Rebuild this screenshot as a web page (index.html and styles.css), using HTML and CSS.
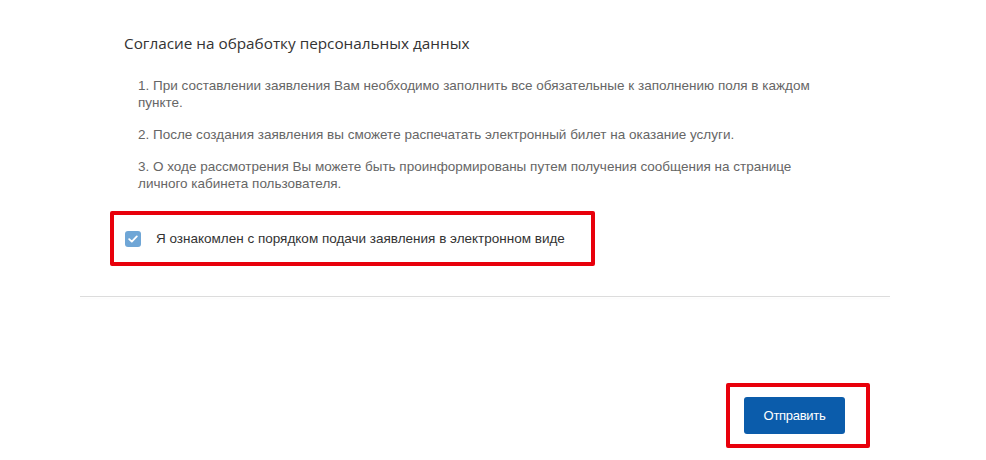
FILE: index.html
```html
<!DOCTYPE html>
<html lang="ru">
<head>
<meta charset="utf-8">
<link rel="stylesheet" href="styles.css">
</head>
<body>
<div class="page">
  <section class="consent">
    <h2 class="title">Согласие на обработку персональных данных</h2>
    <div class="rules">
      <p>1. При составлении заявления Вам необходимо заполнить все обязательные к заполнению поля в каждом пункте.</p>
      <p>2. После создания заявления вы сможете распечатать электронный билет на оказание услуги.</p>
      <p>3. О ходе рассмотрения Вы можете быть проинформированы путем получения сообщения на странице личного кабинета пользователя.</p>
    </div>
    <div class="highlight agree-box">
      <label class="agree">
        <span class="check">
          <svg width="10" height="8" viewBox="0 0 10 8"><path d="M1.2 4.2 L3.8 6.6 L8.8 1.4" fill="none" stroke="#fff" stroke-width="1.8" stroke-linecap="round" stroke-linejoin="round"/></svg>
        </span>
        <span class="agree-text">Я ознакомлен с порядком подачи заявления в электронном виде</span>
      </label>
    </div>
  </section>
  <div class="divider"></div>
  <div class="actions">
    <div class="highlight btn-box">
      <button class="submit" type="button">Отправить</button>
    </div>
  </div>
</div>
</body>
</html>
```
FILE: styles.css
```css
html, body {
  margin: 0;
  padding: 0;
  background: #fff;
}
.page {
  width: 986px;
  height: 460px;
  font-family: "Liberation Sans", Arial, sans-serif;
  overflow: hidden;
}
.consent {
  padding: 33px 0 0 124px;
}
.title {
  margin: 0;
  font-family: "Open Sans", "Liberation Sans", sans-serif;
  font-weight: 400;
  font-size: 15.3px;
  line-height: 20px;
  color: #333;
}
.rules {
  margin: 24px 0 0 14px;
  width: 690px;
  font-size: 13.5px;
  line-height: 17px;
  color: #666;
}
.rules p {
  margin: 0 0 15px;
}
.highlight {
  border: 4px solid #e8000b;
  border-radius: 2px;
}
.agree-box {
  margin: 19px 0 0 -14px;
  width: 477px;
  height: 47px;
  display: flex;
  align-items: center;
}
.agree {
  display: flex;
  align-items: center;
  padding-left: 11px;
}
.check {
  width: 16px;
  height: 16px;
  border-radius: 3px;
  background: #6fa6d6;
  display: flex;
  align-items: center;
  justify-content: center;
}
.agree-text {
  margin-left: 15px;
  font-size: 13.5px;
  color: #333;
}
.divider {
  margin: 30px 96px 0 80px;
  height: 1px;
  background: #dcdcdc;
  box-shadow: 0 2px 2px rgba(0,0,0,0.03);
}
.actions {
  display: flex;
  justify-content: flex-end;
  padding: 86px 116px 0 0;
}
.btn-box {
  width: 136px;
  height: 57px;
  display: flex;
  align-items: center;
  justify-content: center;
}
.submit {
  width: 101px;
  height: 37px;
  border: 0;
  border-radius: 3px;
  background: #0b5cab;
  color: #fff;
  font-family: "Liberation Sans", Arial, sans-serif;
  font-size: 13px;
  letter-spacing: -0.3px;
  padding: 0;
  margin-right: 7px;
}
```
